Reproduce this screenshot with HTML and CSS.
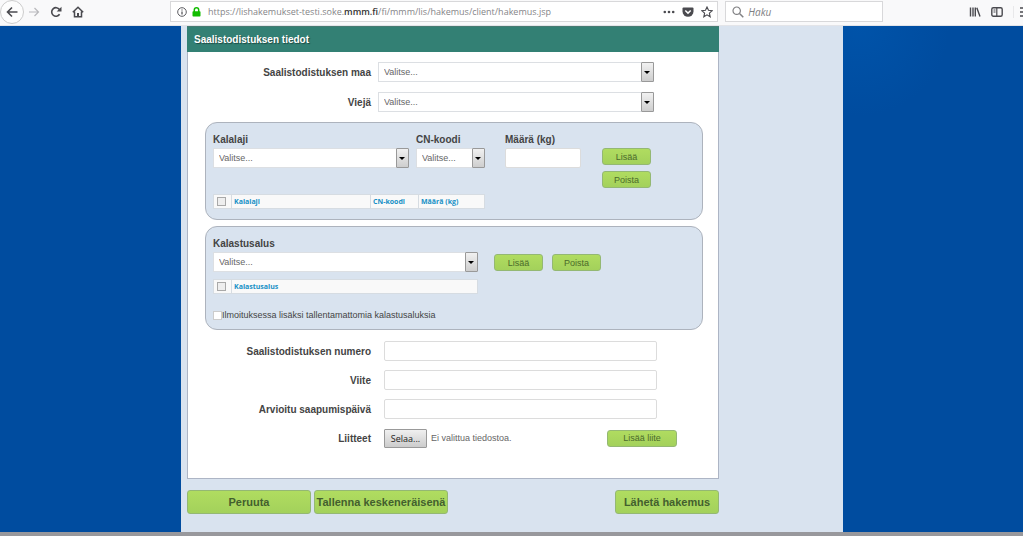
FILE: index.html
```html
<!DOCTYPE html>
<html lang="fi">
<head>
<meta charset="utf-8">
<title>Saalistodistus</title>
<link rel="stylesheet" href="styles.css">
</head>
<body>
<header class="toolbar">
  <nav class="nav">
    <button class="tool back" aria-label="Takaisin"><svg width="12" height="12" viewBox="0 0 12 12"><path d="M11.500 6H1.500M6 1.500L1.500 6L6 10.500" stroke-width="1.600"/></svg></button>
    <button class="tool forward" aria-label="Eteenpäin"><svg width="12" height="12" viewBox="0 0 12 12"><path d="M1 6H10.500M6.500 2L10.500 6L6.500 10"/></svg></button>
    <button class="tool" aria-label="Päivitä"><svg width="12" height="12" viewBox="0 0 12 12"><path d="M9.600 8.300A4.300 4.300 0 1 1 9.500 3.500" stroke-width="1.600"/><path class="solid" d="M11.500 .8V5.600H6.700Z"/></svg></button>
    <button class="tool" aria-label="Koti"><svg width="12" height="12" viewBox="0 0 12 12"><path d="M.8 6.300L6 1.200L11.200 6.300M2.500 5.500V10.800H9.500V5.500" stroke-width="1.500"/><path class="solid" d="M5 7H7V11H5Z"/></svg></button>
  </nav>
  <div class="address">
    <svg width="10" height="10" viewBox="0 0 10 10"><circle cx="5" cy="5" r="4.300" stroke-width=".9"/><path d="M5 4.500V7.500M5 2.400V3.400"/></svg>
    <svg class="lock" width="9" height="10" viewBox="0 0 9 10"><path d="M2.300 5V3A2.200 2.200 0 0 1 6.700 3V5" stroke-width="1.500"/><rect class="solid" x=".5" y="4.300" width="8" height="5.200" rx=".8"/></svg>
    <span class="url">https://lishakemukset-testi.soke.<b>mmm.fi</b>/fi/mmm/lis/hakemus/client/hakemus.jsp</span>
    <button class="tool" aria-label="Sivun toiminnot"><svg width="12" height="12" viewBox="0 0 12 12"><g class="solid"><circle cx="1.800" cy="6" r="1.300"/><circle cx="6" cy="6" r="1.300"/><circle cx="10.200" cy="6" r="1.300"/></g></svg></button>
    <button class="tool" aria-label="Pocket"><svg width="12" height="12" viewBox="0 0 12 12"><path class="solid" d="M1.500 1.500H10.500Q11.500 1.500 11.500 2.500V5.500A5.500 5.200 0 0 1 .5 5.500V2.500Q.5 1.500 1.500 1.500Z"/><path class="light" d="M3.300 4.500L6 7.100L8.700 4.500" stroke-width="1.500"/></svg></button>
    <button class="tool" aria-label="Lisää kirjanmerkki"><svg width="12" height="12" viewBox="0 0 12 12"><path d="M6 1L7.500 4.300L11.200 4.700L8.400 7.100L9.200 10.800L6 8.900L2.800 10.800L3.600 7.100L.8 4.700L4.500 4.300Z" stroke-width="1.100"/></svg></button>
  </div>
  <label class="search">
    <svg width="12" height="12" viewBox="0 0 12 12"><circle cx="4.700" cy="4.700" r="3.700"/><path d="M7.500 7.500L11.300 11.300" stroke-width="1.500"/></svg>
    <input type="search" placeholder="Haku" aria-label="Haku">
  </label>
  <div class="extras">
    <button class="tool" aria-label="Kirjasto"><svg width="12" height="12" viewBox="0 0 12 12"><path d="M1.500 1.500V10.500M4 1.500V10.500M6.300 1.500V10.500M7.800 1.700L11 10.500" stroke-width="1.400"/></svg></button>
    <button class="tool" aria-label="Sivupaneeli"><svg width="12" height="12" viewBox="0 0 12 12"><rect x=".8" y="1.800" width="10.400" height="8.400" rx="1.500" stroke-width="1.400"/><path d="M5.800 2V10M2.500 4H4.500M2.500 6H4.500"/></svg></button>
    <button class="tool menu" aria-label="Valikko"><svg width="12" height="12" viewBox="0 0 12 12"><path d="M1 2H11M1 6H11M1 10H11" stroke-width="1.300"/></svg></button>
  </div>
</header>
<main class="page">
  <form class="content">
    <section class="panel">
      <h1 class="title">Saalistodistuksen tiedot</h1>
      <div class="body">
        <div class="row">
          <label for="maa">Saalistodistuksen maa</label>
          <span class="select"><select id="maa"><option>Valitse...</option></select></span>
        </div>
        <div class="row">
          <label for="vieja">Viejä</label>
          <span class="select"><select id="vieja"><option>Valitse...</option></select></span>
        </div>
        <div class="group">
          <div class="fields">
            <div class="field species"><label for="laji">Kalalaji</label><span class="select"><select id="laji"><option>Valitse...</option></select></span></div>
            <div class="field code"><label for="cn">CN-koodi</label><span class="select"><select id="cn"><option>Valitse...</option></select></span></div>
            <div class="field amount"><label for="kg">Määrä (kg)</label><input class="text" id="kg" type="text"></div>
            <div class="stack"><button type="button" class="btn">Lisää</button><button type="button" class="btn">Poista</button></div>
          </div>
          <table class="list species-list">
            <tr><th class="check"><input type="checkbox" aria-label="Valitse kaikki kalalajit"></th><th>Kalalaji</th><th class="col-code">CN-koodi</th><th class="col-amount">Määrä (kg)</th></tr>
          </table>
        </div>
        <div class="group vessels">
          <div class="fields">
            <div class="field vessel"><label for="alus">Kalastusalus</label><span class="select"><select id="alus"><option>Valitse...</option></select></span></div>
            <div class="pair"><button type="button" class="btn">Lisää</button><button type="button" class="btn">Poista</button></div>
          </div>
          <table class="list vessel">
            <tr><th class="check"><input type="checkbox" aria-label="Valitse kaikki alukset"></th><th>Kalastusalus</th></tr>
          </table>
          <label class="extra"><input type="checkbox">Ilmoituksessa lisäksi tallentamattomia kalastusaluksia</label>
        </div>
        <div class="row wide"><label for="numero">Saalistodistuksen numero</label><input class="text" id="numero" type="text"></div>
        <div class="row wide"><label for="viite">Viite</label><input class="text" id="viite" type="text"></div>
        <div class="row wide"><label for="pvm">Arvioitu saapumispäivä</label><input class="text" id="pvm" type="text"></div>
        <div class="row wide">
          <span class="caption">Liitteet</span>
          <div class="attach">
            <label class="browse">Selaa...<input type="file" hidden></label>
            <span class="status">Ei valittua tiedostoa.</span>
            <button type="button" class="btn attach-btn">Lisää liite</button>
          </div>
        </div>
      </div>
    </section>
    <div class="actions">
      <button type="button" class="btn big cancel">Peruuta</button>
      <button type="button" class="btn big">Tallenna keskeneräisenä</button>
      <button type="submit" class="btn big send">Lähetä hakemus</button>
    </div>
  </form>
</main>
<footer class="edge"></footer>
</body>
</html>
```
FILE: styles.css
```css
*, *::after { box-sizing: border-box; }
body {
  margin: 0;
  min-height: 100vh;
  display: flex;
  flex-direction: column;
  font-family: "Liberation Sans", Arial, sans-serif;
  font-size: 10px;
  color: #444;
}
button, input, select { font: inherit; color: inherit; margin: 0; }

.toolbar {
  display: flex;
  align-items: center;
  height: 26px;
  padding-bottom: 2px;
  background: #f9f9fa;
  border-bottom: 1px solid #e3e4e8;
  color: #4a4a4f;
}
.toolbar svg { display: block; flex: none; fill: none; stroke: currentColor; stroke-width: 1.2; }
.toolbar .solid { fill: currentColor; stroke: none; }
.toolbar .light { stroke: #fff; }
.tool { display: flex; padding: 0; border: 0; background: none; }
.nav { display: flex; align-items: center; gap: 10px; width: 170px; flex: none; }
.back {
  width: 24px;
  height: 24px;
  align-items: center;
  justify-content: center;
  border: 1px solid #ccc;
  border-radius: 50%;
  background: #fdfdfd;
}
.nav .back { margin-right: -6px; }
.forward { color: #b8b8bb; }
.address {
  display: flex;
  align-items: center;
  gap: 7px;
  flex: 1 1 549px;
  height: 21px;
  padding: 0 4px 0 6px;
  background: #fff;
  border: 1px solid #d8d8da;
}
.address > .lock { color: #12bc00; margin-left: -2px; }
.url { flex: 1; font: 9px "Open Sans", "Noto Sans", sans-serif; color: #858588; white-space: nowrap; }
.url b { font-weight: 600; color: #333; }
.search {
  display: flex;
  align-items: center;
  gap: 4px;
  width: 158px;
  height: 21px;
  margin-left: 7px;
  padding-left: 6px;
  background: #fff;
  border: 1px solid #d8d8da;
  color: #808083;
}
.search input {
  width: 100%;
  padding: 0;
  border: 0;
  outline: 0;
  background: none;
  font: italic 10px "Open Sans", "Noto Sans", sans-serif;
}
.search input::placeholder { color: #808083; }
.extras { display: flex; gap: 10px; width: 140px; flex: none; padding-left: 86px; overflow: hidden; }
.menu { padding-left: 5px; border-left: 1px solid #e8e8ea; }

.page {
  flex: 1;
  display: flex;
  justify-content: center;
  padding-left: 1px;
  background: radial-gradient(circle at 84% 0, #0053a9, #004c9f 90px);
}
.content { width: 100%; max-width: 662px; padding: 0 124px 17px 6px; background: #d9e3ef; }
.panel { background: #fff; border: 1px solid #adb5c5; border-top: 0; }
.title {
  margin: 0 -1px;
  padding: 0 7px;
  background: #338074;
  border-top: 1px solid #477a72;
  color: #fff;
  font-size: 10px;
  line-height: 25px;
  height: 26px;
  text-shadow: 1px 1px 1px #1c4a43;
}
.body { display: flex; flex-direction: column; padding: 10px 15px 21px 17px; }
.row { display: grid; grid-template-columns: 166px 276px; gap: 7px; align-items: center; min-height: 20px; margin-bottom: 10px; }
.row > label, .caption, .field label { font-weight: bold; }
.row > label, .caption { text-align: right; }
.row.wide { grid-template-columns: 166px 1fr; gap: 13px; margin-bottom: 9px; }
.row.wide > .text { width: 273px; }
.text { height: 20px; padding: 0 5px; border: 1px solid #dcdcdc; border-radius: 2px; background: #fff; }
.select { position: relative; display: block; }
.select select {
  display: block;
  width: 100%;
  height: 20px;
  padding: 0 16px 0 5px;
  appearance: none;
  border: 1px solid #dcdfe3;
  border-radius: 0;
  background: #fff;
  font-size: 9px;
  color: #666;
}
.select::after {
  content: "";
  position: absolute;
  top: 0;
  right: 0;
  width: 13px;
  height: 20px;
  border: 1px solid #999;
  border-radius: 1px;
  background: linear-gradient(#f1f1f1, #cecece);
  pointer-events: none;
}
.select::before {
  content: "";
  position: absolute;
  z-index: 1;
  top: 9px;
  right: 4px;
  border: solid transparent;
  border-width: 3px 3px 0;
  border-top-color: #000;
  pointer-events: none;
}
.group { margin-bottom: 6px; padding: 11px 7px 10px; border: 1px solid #adb3bd; border-radius: 12px; background: #d9e3ef; }
.group.vessels { padding-bottom: 8px; }
.group + .row { margin-top: 5px; }
.fields { display: flex; align-items: flex-start; gap: 7px; }
.field label { display: block; line-height: 12px; margin-bottom: 2px; }
.field .text { width: 100%; display: block; }
.species { width: 196px; }
.code { width: 69px; }
.amount { width: 76px; margin-left: 13px; }
.stack { display: flex; flex-direction: column; gap: 6px; margin: 14px 0 0 14px; }
.vessel { width: 265px; }
.pair { display: flex; gap: 9px; margin: 16px 0 0 9px; }
.btn {
  width: 49px;
  height: 17px;
  padding: 0;
  border: 1px solid #94b873;
  border-radius: 3px;
  background: linear-gradient(#b0dc60, #a3d15b);
  font-size: 9px;
  color: #4b6b2b;
  white-space: nowrap;
}
.list { border-collapse: collapse; table-layout: fixed; background: #f9f9f9; }
.list th { height: 14px; padding: 0 2px; border: 1px solid #d6dce2; text-align: left; font: bold 7px "Open Sans", sans-serif; color: #1790c6; }
.list .check { width: 18px; }
.check input { display: block; margin-left: 1px; }
input[type="checkbox"] { appearance: none; flex: none; width: 9px; height: 9px; border: 1px solid #a9a9a9; background: #eee; }
.species-list { width: 272px; margin-top: 6px; }
.col-code { width: 48px; }
.col-amount { width: 66px; }
.group .list.vessel { margin-top: 7px; }
.extra { display: flex; align-items: center; margin-top: 15px; line-height: 12px; font-size: 9px; }
.extra input[type="checkbox"] { border-color: #ccc; background: #fff; }
.attach { display: flex; align-items: center; }
.browse { width: 43px; height: 19px; border: 1px solid #999; border-radius: 1px; background: linear-gradient(#f0f0f0, #ccc); text-align: center; line-height: 17px; font-family: "Open Sans", sans-serif; font-size: 9px; color: #222; }
.status { margin-left: 4px; font-size: 9px; color: #666; }
.attach-btn { width: 70px; margin: 0 26px 0 auto; }
.actions { display: flex; gap: 3px; margin-top: 11px; }
.big { height: 24px; width: 134px; font-size: 11px; font-weight: bold; color: #435f2e; }
.cancel { width: 124px; }
.send { width: 104px; margin-left: auto; }
.edge { height: 4px; background: #98989c; }
```
